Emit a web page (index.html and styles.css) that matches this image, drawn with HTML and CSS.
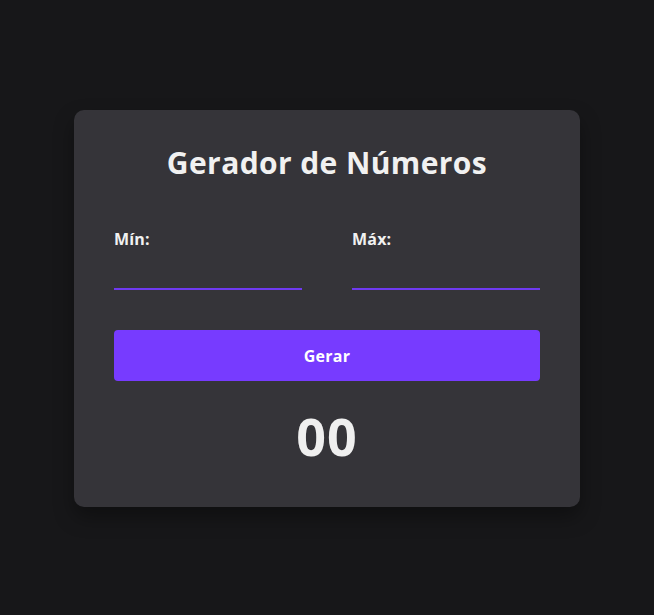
FILE: index.html
```html
<!DOCTYPE html>
<html lang="pt">
<head>
<meta charset="utf-8">
<title>Gerador de Números</title>
<link rel="stylesheet" href="styles.css">
</head>
<body>
<main class="page">
  <section class="card">
    <h1 class="title">Gerador de Números</h1>
    <div class="fields">
      <label class="field">
        <span class="field-label">Mín:</span>
        <input class="field-input" type="number">
      </label>
      <label class="field">
        <span class="field-label">Máx:</span>
        <input class="field-input" type="number">
      </label>
    </div>
    <button class="btn" type="button">Gerar</button>
    <div class="result">00</div>
  </section>
</main>
</body>
</html>
```

FILE: styles.css
```css
* { box-sizing: border-box; }
html, body { margin: 0; padding: 0; }
body {
  background: #171719;
  font-family: "Open Sans", "Noto Sans", sans-serif;
  color: #f1f1f1;
  min-height: 615px;
}
.page {
  display: flex;
  justify-content: center;
  padding-top: 110px;
}
.card {
  width: 506px;
  height: 397px;
  background: #353439;
  border-radius: 10px;
  padding: 34px 40px 0;
  box-shadow: 0 10px 20px rgba(0, 0, 0, 0.35);
  display: flex;
  flex-direction: column;
}
.title {
  margin: 0;
  text-align: center;
  font-size: 30px;
  font-weight: 700;
  letter-spacing: 0.4px;
  line-height: 38px;
  color: #f1f1f1;
}
.fields {
  display: grid;
  grid-template-columns: 188px 188px;
  column-gap: 50px;
  margin-top: 46px;
}
.field {
  display: flex;
  flex-direction: column;
}
.field-label {
  font-size: 16px;
  font-weight: 700;
  letter-spacing: 0.2px;
  line-height: 22px;
}
.field-input {
  margin-top: 16px;
  height: 24px;
  background: transparent;
  border: none;
  border-bottom: 2px solid #6f3af0;
  color: #f1f1f1;
  outline: none;
  font: inherit;
}
.btn {
  margin-top: 40px;
  height: 51px;
  border: none;
  border-radius: 4px;
  background: #773bff;
  color: #ffffff;
  font-family: inherit;
  font-size: 16px;
  font-weight: 700;
  letter-spacing: 0.3px;
}
.result {
  margin-top: 23px;
  text-align: center;
  font-size: 52px;
  font-weight: 700;
  letter-spacing: 1px;
  line-height: 64px;
  color: #efefef;
}
```
